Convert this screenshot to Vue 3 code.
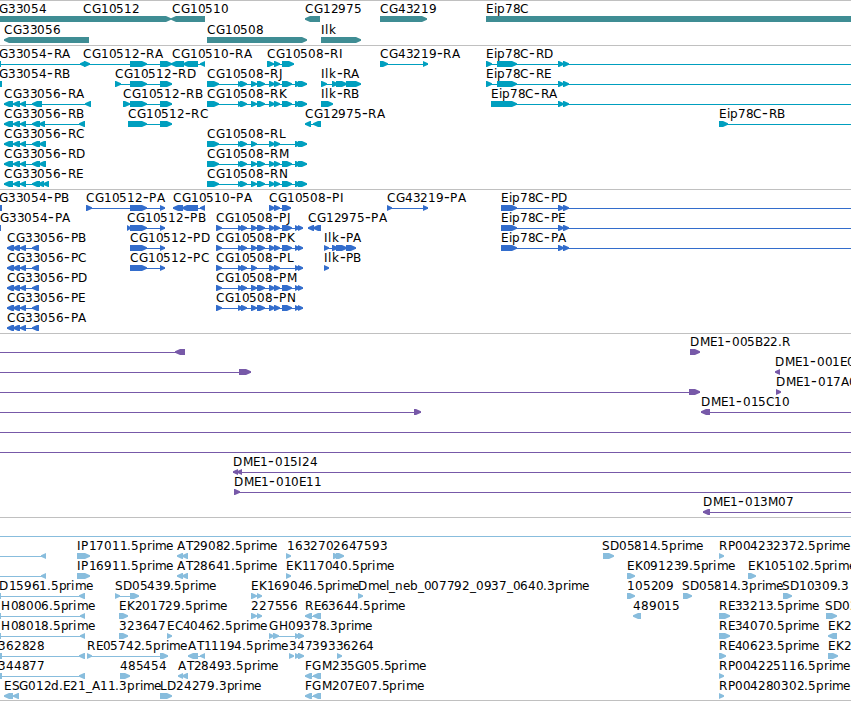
<script setup>
// Horizontal advance of each character in a label, in pixels.
const ADV = {
  C: 8.1, G: 9.3, R: 8.1, A: 8.2, B: 7.5, D: 9.1, E: 7.2, F: 6.9, H: 9.1, I: 3.9, J: 4, K: 8.1, L: 6.9,
  M: 10.3, N: 9, P: 7.4, S: 7.3, T: 7.1, '-': 7.2, '.': 4, _: 6, i: 3.6, p: 7.7, k: 7, l: 3.6,
  r: 5, m: 11, e: 7.1, n: 7.6, b: 7.7, d: 7.7
}
const glyphX = (text, x) => {
  const out = []
  let pos = x + 0.4
  for (const ch of text) {
    out.push(Math.round(ch === '-' ? pos + 0.6 : pos))
    pos += ADV[ch] ?? 7.7
  }
  return out
}

// Splits a label at its hyphen so that the hyphen can be drawn wider.
const parts = ([text, x]) => {
  const xs = glyphX(text, x)
  const out = []
  let from = 0
  for (const s of text.split(/(-)/)) {
    if (s) out.push({ s, dash: s === '-', x: xs.slice(from, from + s.length).join(' ') })
    from += s.length
  }
  return out
}

// A block that ends in a pointed tip: dir 1 points right, -1 points left.
const block = ([a, b], dir) => {
  const w = b - a
  const t = Math.min(5, w)
  if (w < 3) return `${a},15 ${b},15 ${b},21 ${a},21`
  return dir > 0
    ? `${a},15 ${b - t},15 ${b},17.3 ${b},18.7 ${b - t},21 ${a},21`
    : `${b},15 ${a + t},15 ${a},17.3 ${a},18.7 ${a + t},21 ${b},21`
}

const row = (t = [], l = [], r = [], v = []) => ({ t, l, r, v })

const rnaFull = [[207, 219], [238, 243], [240, 247], [251, 257], [257, 265], [269, 275], [274, 280], [282, 292], [295, 301], [298, 307]]
const rnaShort = [[207, 219], [238, 243], [240, 247], [251, 257], [269, 275], [274, 280], [295, 301], [298, 307]]
const cdsFull = [[216, 222], [238, 243], [241, 247], [251, 257], [257, 265], [269, 275], [274, 280], [282, 292], [295, 300], [298, 303]]
const cdsShort = [[216, 222], [238, 243], [241, 247], [251, 257], [269, 275], [274, 280], [295, 300], [298, 303]]
const eipTail = [[558, 564], [563, 569]]
const rnaL = [[4, 13], [13, 20], [20, 26]]
const cdsL = [[7, 14], [13, 20], [20, 26], [32, 39]]

const tracks = [
  {
    id: 'gene',
    rows: [
      row([['CG33054', -10], ['CG10512', 83], ['CG10510', 172], ['CG12975', 305], ['CG43219', 380], ['Eip78C', 486]], [],
        [[-10, 171], [380, 427], [486, 900]], [[171, 205], [305, 320]]),
      row([['CG33056', 4], ['CG10508', 207], ['Ilk', 321]], [], [[207, 307], [321, 361]], [[4, 89]])
    ]
  },
  {
    id: 'rna',
    rows: [
      row([['CG33054-RA', -10], ['CG10512-RA', 83], ['CG10510-RA', 172], ['CG10508-RI', 267], ['CG43219-RA', 380], ['Eip78C-RD', 486]],
        [[0, 205], [267, 294], [380, 428], [486, 851]],
        [[-1, 1], [84, 90], [130, 147], [160, 172], [267, 274], [274, 280], [282, 294], [380, 388], [423, 428], [486, 492], [497, 517], ...eipTail],
        [[80, 85], [171, 184], [183, 198], [200, 205]]),
      row([['CG33054-RB', -10], ['CG10512-RD', 115], ['CG10508-RJ', 207], ['Ilk-RA', 321], ['Eip78C-RE', 486]],
        [[115, 172], [207, 307], [321, 361], [486, 851]],
        [[0, 2], [115, 121], [130, 147], [160, 172], ...rnaFull, [321, 327], [332, 338], [336, 347], [346, 361], [486, 492], [497, 517], ...eipTail]),
      row([['CG33056-RA', 4], ['CG10512-RB', 123], ['CG10508-RK', 207], ['Ilk-RB', 321], ['Eip78C-RA', 491]],
        [[4, 91], [123, 172], [207, 307], [491, 851]],
        [[123, 130], [130, 147], [160, 172], ...rnaFull, [321, 333], [491, 517], ...eipTail],
        [...rnaL, [32, 42], [85, 91]]),
      row([['CG33056-RB', 4], ['CG10512-RC', 128], ['CG12975-RA', 305], ['Eip78C-RB', 719]],
        [[4, 85], [128, 172], [305, 321], [719, 851]],
        [[128, 147], [160, 172], [719, 728]],
        [...rnaL, [32, 40], [39, 45], [79, 85], [305, 311], [313, 321]]),
      row([['CG33056-RC', 4], ['CG10508-RL', 207]], [[4, 46], [207, 307]], rnaShort, [...rnaL, [32, 40], [39, 46]]),
      row([['CG33056-RD', 4], ['CG10508-RM', 207]], [[4, 46], [207, 307]], rnaFull, [...rnaL, [32, 40], [39, 46]]),
      row([['CG33056-RE', 4], ['CG10508-RN', 207]], [[4, 49], [207, 307]], rnaFull, [...rnaL, [32, 40], [38, 44], [43, 49]])
    ]
  },
  {
    id: 'cds',
    rows: [
      row([['CG33054-PB', -10], ['CG10512-PA', 86], ['CG10510-PA', 173], ['CG10508-PI', 269], ['CG43219-PA', 387], ['Eip78C-PD', 501]],
        [[86, 165], [173, 205], [269, 291], [387, 428], [501, 851]],
        [[0, 2], [86, 92], [130, 147], [160, 165], [269, 275], [274, 280], [282, 291], [387, 392], [423, 428], [501, 517], ...eipTail],
        [[173, 183], [182, 198], [200, 205]]),
      row([['CG33054-PA', -9], ['CG10512-PB', 127], ['CG10508-PJ', 216], ['CG12975-PA', 308], ['Eip78C-PE', 501]],
        [[127, 165], [216, 303], [308, 321], [501, 851]],
        [[-1, 1], [127, 131], [130, 147], [160, 165], ...cdsFull, [501, 517], ...eipTail],
        [[308, 314], [313, 321]]),
      row([['CG33056-PB', 7], ['CG10512-PD', 130], ['CG10508-PK', 216], ['Ilk-PA', 324], ['Eip78C-PA', 501]],
        [[7, 39], [130, 165], [216, 303], [324, 356], [501, 851]],
        [[130, 147], [160, 165], ...cdsFull, [324, 329], [332, 338], [336, 347], [346, 356], [501, 517], ...eipTail], cdsL),
      row([['CG33056-PC', 7], ['CG10512-PC', 130], ['CG10508-PL', 216], ['Ilk-PB', 324]],
        [[7, 39], [130, 165], [216, 303]], [[130, 147], [160, 165], ...cdsShort, [324, 329]], cdsL),
      row([['CG33056-PD', 7], ['CG10508-PM', 216]], [[7, 39], [216, 303]], cdsFull, cdsL),
      row([['CG33056-PE', 7], ['CG10508-PN', 216]], [[7, 39], [216, 303]], cdsFull, cdsL),
      row([['CG33056-PA', 7]], [[7, 39]], [], cdsL)
    ]
  },
  {
    id: 'bac',
    rows: [
      row([['DME1-005B22.R', 690]], [[0, 185]], [[690, 700]], [[175, 185]]),
      row([['DME1-001E0', 775]], [[0, 251]], [[239, 251]], [[775, 780]]),
      row([['DME1-017A0', 776]], [[0, 700]], [[689, 700], [776, 781]]),
      row([['DME1-015C10', 701]], [[0, 421], [701, 851]], [[414, 421]], [[701, 710]]),
      row([], [[0, 851]]),
      row([], [[0, 851]]),
      row([['DME1-015I24', 233]], [[233, 851]], [], [[233, 238], [237, 242]]),
      row([['DME1-010E11', 234]], [[234, 851]], [[234, 240]]),
      row([['DME1-013M07', 703]], [[703, 851]], [], [[703, 710]])
    ]
  },
  {
    id: 'est',
    rows: [
      row([['IP17011.5prime', 77], ['AT29082.5prime', 177], ['163270', 287], ['2647593', 333], ['SD05814.5prime', 602], ['RP004232372.5prime', 719]],
        [[0, 46]], [[77, 90], [286, 291], [333, 339], [336, 344], [603, 614], [719, 724]], [[41, 46], [177, 183], [182, 188]]),
      row([['IP16911.5prime', 77], ['AT28641.5prime', 177], ['EK117040.5prime', 286], ['EK091239.5prime', 627], ['EK105102.5prime', 748]],
        [[0, 46]], [[77, 90], [286, 291], [627, 635], [748, 756]], [[41, 46], [177, 183], [182, 188]]),
      row([['D15961.5prime', -1], ['SD05439.5prime', 115], ['EK169046.5prime', 251], ['Dmel_neb_007792_0937_0640.3prime', 358], ['105209', 627], ['SD05814.3prime', 682], ['SD10309.3', 782]],
        [[0, 85], [115, 139]], [[115, 120], [130, 139], [251, 257], [257, 262], [358, 363], [627, 635], [683, 692], [783, 792]], [[0, 1], [79, 85]]),
      row([['H08006.5prime', 1], ['EK201729.5prime', 119], ['227556', 251], ['RE63644.5prime', 305], ['489015', 633], ['RE33213.5prime', 719], ['SD02', 825]],
        [[0, 85], [305, 321]], [[119, 128], [251, 257], [257, 262], [719, 730], [826, 837]], [[0, 1], [80, 85], [305, 312], [313, 321], [633, 641]]),
      row([['H08018.5prime', 1], ['323647', 119], ['EC40462.5prime', 167], ['GH09378.3prime', 269], ['RE34070.5prime', 719], ['EK2', 828]],
        [[0, 85], [269, 304]], [[119, 128], [167, 172], [269, 274], [273, 279], [295, 300], [298, 304], [719, 730]], [[0, 1], [80, 85], [828, 837]]),
      row([['362828', -2], ['RE05742.5prime', 87], ['AT11194.5prime', 188], ['34739336264', 289], ['RE40623.5prime', 719], ['EK2', 828]],
        [[0, 85], [87, 168], [188, 205]], [[87, 92], [160, 168], [289, 294], [295, 300], [298, 304], [337, 342], [719, 726], [828, 838]], [[0, 2], [79, 85], [188, 198], [200, 205]]),
      row([['344877', -2], ['485454', 120], ['AT28493.5prime', 178], ['FGM235G05.5prime', 305], ['RP004225116.5prime', 719]],
        [[0, 85], [305, 321]], [[120, 130], [719, 724]], [[0, 2], [79, 85], [178, 183], [182, 188], [305, 312], [313, 321]]),
      row([['ESG012d.E21_A11.3prime', 4], ['LD24279.3prime', 160], ['FGM207E07.5prime', 305], ['RP004280302.5prime', 719]],
        [[305, 321]], [[160, 172], [719, 724]], [[4, 13], [13, 19], [305, 312], [313, 321]])
    ]
  }
]
</script>

<template>
  <main class="browser">
    <section v-for="track in tracks" :key="track.id" class="track" :class="track.id">
      <svg v-for="(r, i) in track.rows" :key="i" class="row" width="851" height="20">
        <rect v-for="(s, k) in r.l" :key="'l' + k" :x="s[0]" y="18" :width="s[1] - s[0]" height="1" />
        <polygon v-for="(s, k) in r.r" :key="'r' + k" :points="block(s, 1)" />
        <polygon v-for="(s, k) in r.v" :key="'v' + k" :points="block(s, -1)" />
        <text v-for="(s, k) in r.t" :key="'t' + k" class="label" y="12"><tspan v-for="(p, n) in parts(s)" :key="n" :x="p.x" :class="{ dash: p.dash }">{{ p.s }}</tspan></text>
      </svg>
    </section>
  </main>
</template>

<style>
body {
  background: #fff;
}
</style>

<style scoped>
.browser {
  display: flex;
  flex-direction: column;
  width: 851px;
  height: 701px;
  box-sizing: border-box;
  overflow: hidden;
  background: #fff;
  border-bottom: 1px solid #c0c0c0;
}
.track {
  display: flex;
  flex-direction: column;
  flex: none;
  border-top: 1px solid #c0c0c0;
  padding-bottom: 3px;
}
.row {
  display: block;
  flex: none;
  overflow: visible;
}
.label {
  font-family: "DejaVu Sans", sans-serif;
  font-size: 12px;
  fill: #000;
}
.dash {
  font-size: 16px;
}
.gene {
  fill: #3f8d94;
  gap: 1px;
  padding-bottom: 2px;
  height: 42px;
}
.rna {
  fill: #009fbf;
}
.cds {
  fill: #336dcc;
}
.bac {
  fill: #7759a8;
}
.est {
  fill: #88bddd;
  padding-bottom: 2px;
}
.est::before {
  content: "";
  height: 1px;
  margin: 18px 0 1px;
  background: #88bddd;
}
</style>
